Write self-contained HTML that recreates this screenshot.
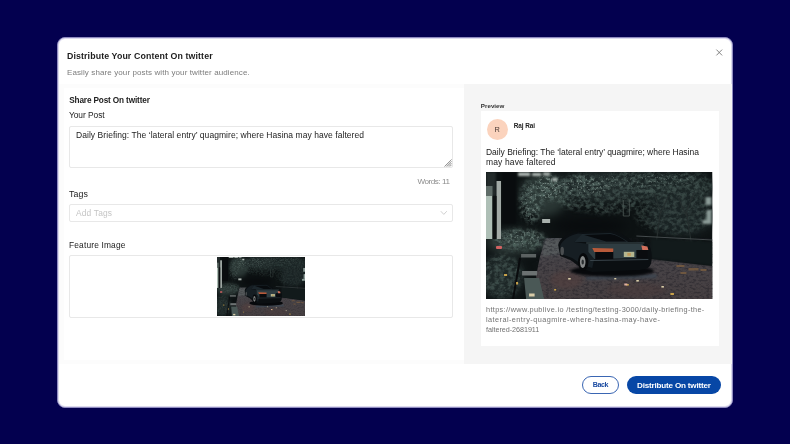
<!DOCTYPE html>
<html><head><meta charset="utf-8">
<style>
*{margin:0;padding:0;box-sizing:border-box}
html,body{width:790px;height:444px;overflow:hidden;background:#03004f;font-family:"Liberation Sans",sans-serif;color:#222}
.abs{position:absolute}
.t{position:absolute;white-space:nowrap;line-height:1;filter:blur(0.3px)}
#modal{position:absolute;left:57px;top:37px;width:676px;height:370.6px;background:#fff;border-radius:8px;border:1px solid #8f8bc0;box-shadow:inset 0 0 0 1px #dcdaee}
#bodybg{position:absolute;left:59px;top:84px;width:405px;height:279.5px;background:#fcfcfc}
#left{position:absolute;left:64px;top:88px;width:400px;height:272px;background:#fff}
#right{position:absolute;left:464px;top:84px;width:267.5px;height:279.5px;background:#f5f5f5}
#card{position:absolute;left:481px;top:111.4px;width:237.6px;height:234.4px;background:#fff}
.box{position:absolute;background:#fff;border:1px solid #e8e8e8;border-radius:2px}
</style></head><body>
<svg width="0" height="0" style="position:absolute">
<defs>
<filter id="fol" x="0" y="0" width="100%" height="100%" color-interpolation-filters="sRGB">
<feTurbulence type="fractalNoise" baseFrequency="0.22 0.28" numOctaves="3" seed="9" result="n"/>
<feColorMatrix in="n" type="matrix" values="0 0 0 0 0.33  0 0 0 0 0.41  0 0 0 0 0.39  3 0 0 0 -1.1"/>
</filter>
<filter id="fol2" x="0" y="0" width="100%" height="100%" color-interpolation-filters="sRGB">
<feTurbulence type="fractalNoise" baseFrequency="0.45" numOctaves="2" seed="23" result="n"/>
<feColorMatrix in="n" type="matrix" values="0 0 0 0 0.62  0 0 0 0 0.70  0 0 0 0 0.67  7 0 0 0 -4.0"/>
</filter>
<filter id="pav" x="0" y="0" width="100%" height="100%" color-interpolation-filters="sRGB">
<feTurbulence type="fractalNoise" baseFrequency="0.3 0.5" numOctaves="2" seed="11" result="n"/>
<feColorMatrix in="n" type="matrix" values="0 0 0 0 0.10  0 0 0 0 0.10  0 0 0 0 0.13  4 0 0 0 -1.8"/>
</filter>
<filter id="bl1" color-interpolation-filters="sRGB" x="-30%" y="-30%" width="160%" height="160%"><feGaussianBlur stdDeviation="0.8"/></filter>
<filter id="bl2" color-interpolation-filters="sRGB" x="-50%" y="-50%" width="200%" height="200%"><feGaussianBlur stdDeviation="2.2"/></filter>
<filter id="bl4" color-interpolation-filters="sRGB" x="-50%" y="-50%" width="200%" height="200%"><feGaussianBlur stdDeviation="4"/></filter>
<linearGradient id="pg" x1="0" y1="0" x2="0" y2="1"><stop offset="0" stop-color="#4c5054"/><stop offset="0.4" stop-color="#474347"/><stop offset="1" stop-color="#463f41"/></linearGradient>
<mask id="mk1" maskUnits="userSpaceOnUse" x="0" y="0" width="226" height="127"><g filter="url(#bl2)">
<ellipse cx="45" cy="30" rx="12" ry="22" fill="#bbb"/>
<ellipse cx="64" cy="16" rx="14" ry="13" fill="#d0d0d0"/>
<ellipse cx="95" cy="20" rx="28" ry="18" fill="#ccc"/>
<ellipse cx="150" cy="13" rx="40" ry="13" fill="#a0a0a0"/>
<ellipse cx="200" cy="14" rx="26" ry="14" fill="#909090"/>
<ellipse cx="188" cy="42" rx="40" ry="20" fill="#707070"/>
<ellipse cx="120" cy="30" rx="36" ry="12" fill="#8a8a8a"/>
<ellipse cx="34" cy="68" rx="26" ry="11" fill="#ccc"/>
<ellipse cx="16" cy="104" rx="20" ry="22" fill="#8a8a8a"/>
<ellipse cx="198" cy="78" rx="30" ry="10" fill="#505050"/>
</g></mask>
<mask id="mk2" maskUnits="userSpaceOnUse" x="0" y="0" width="226" height="127"><g filter="url(#bl2)">
<ellipse cx="62" cy="16" rx="14" ry="12" fill="#8a8a8a"/>
<ellipse cx="44" cy="30" rx="9" ry="18" fill="#666"/>
<ellipse cx="100" cy="14" rx="24" ry="10" fill="#777"/>
<ellipse cx="160" cy="8" rx="50" ry="7" fill="#555"/>
<ellipse cx="36" cy="66" rx="20" ry="8" fill="#666"/>
</g></mask>
<symbol id="photo" viewBox="0 0 226 127" preserveAspectRatio="none">
<rect width="226" height="127" fill="#0d1213"/>
<!-- mid-tone foliage masses -->
<g filter="url(#bl4)">
<ellipse cx="58" cy="22" rx="24" ry="22" fill="#2a3634"/>
<ellipse cx="120" cy="14" rx="50" ry="16" fill="#202a2a"/>
<ellipse cx="185" cy="16" rx="45" ry="16" fill="#1c2626"/>
<ellipse cx="195" cy="44" rx="34" ry="20" fill="#1a2324"/>
<ellipse cx="30" cy="70" rx="30" ry="12" fill="#2c3836"/>
<ellipse cx="16" cy="105" rx="22" ry="22" fill="#1e2828"/>
<ellipse cx="104" cy="54" rx="36" ry="8" fill="#090c0e"/>
</g>
<!-- foliage speckle -->
<g style="opacity:var(--spk,1)">
<rect x="0" y="0" width="226" height="127" filter="url(#fol)" mask="url(#mk1)"/>
<rect x="0" y="0" width="226" height="127" filter="url(#fol2)" mask="url(#mk2)"/>
</g>
<!-- dark trunk -->
<rect x="16" y="0" width="14" height="52" fill="#090c0e" filter="url(#bl1)"/>
<rect x="0" y="0" width="10" height="24" fill="#232b2b" filter="url(#bl1)"/>
<!-- pillar + post -->
<rect x="0" y="24" width="6.5" height="43" fill="#aebfb6"/>
<rect x="0" y="14" width="6.5" height="10" fill="#5f6c68"/>
<rect x="10.5" y="9" width="4.5" height="58" fill="#a2aaa6"/>
<rect x="6.5" y="24" width="4" height="43" fill="#0d1112"/>
<!-- sky bits -->
<g fill="#b4bcb8" filter="url(#bl1)"><rect x="32" y="0.5" width="12" height="3.5"/><rect x="46" y="1" width="9" height="3"/><rect x="57" y="0.5" width="7" height="3"/><rect x="66" y="6" width="5" height="3"/></g>
<rect x="56" y="47" width="8" height="4" fill="#a8b0ac"/>
<!-- right house bits -->
<g fill="#8c9c98" filter="url(#bl1)"><rect x="219" y="25" width="6" height="8"/><rect x="220" y="38" width="5" height="10"/><rect x="216" y="48" width="9" height="4"/></g>
<path d="M137 28 V44 M143 28 V44 M137 44 H143" stroke="#4c5654" stroke-width="0.8" fill="none"/>
<!-- tree trunks right -->
<path d="M170 70 L174 40 L168 22 M174 42 L182 24 M205 72 L200 40 L208 20 M200 44 L192 26" stroke="#262e2e" stroke-width="1.1" fill="none"/>
<!-- pavement -->
<path d="M60 66 L100 66 L100 90 L164 87 L226 94 L226 127 L52 127 L50 104 L54 84 Z" fill="url(#pg)"/>
<path d="M58 68 L74 68 L76 82 L56 84 Z" fill="#55595b" filter="url(#bl1)"/>
<rect x="50" y="66" width="176" height="61" filter="url(#pav)" opacity="0.7" style="opacity:var(--pv,0.38)"/>
<ellipse cx="80" cy="108" rx="16" ry="9" fill="#54403f" opacity="0.6" filter="url(#bl2)"/>
<ellipse cx="150" cy="118" rx="30" ry="7" fill="#4c3c3c" opacity="0.5" filter="url(#bl2)"/>
<path d="M100 104 L170 102 L170 106 L100 108 Z" fill="#3c4854" opacity="0.7" filter="url(#bl1)"/>
<!-- steps -->
<rect x="35" y="82" width="15" height="3.5" fill="#5c6262"/>
<rect x="36" y="99" width="15" height="4.5" fill="#6c7272"/>
<path d="M38 106 L53 106 L58 127 L40 127 Z" fill="#4a5856"/>
<path d="M34 86 L27 127" stroke="#0a0c0e" stroke-width="2"/>
<rect x="10" y="74" width="6" height="3" rx="1" fill="#d06262"/>
<!-- dark bush right -->
<path d="M164 66 L226 70 L226 93.5 L164 86.5 Z" fill="#121a1b" filter="url(#bl1)"/>
<path d="M150 64 L226 68" stroke="#444a4c" stroke-width="1.2"/>
<!-- car shadow -->
<ellipse cx="126" cy="99" rx="42" ry="5.5" fill="#07090c" filter="url(#bl1)"/>
<!-- car body -->
<path d="M72 73 C73 66 82 61 92 60 L126 59 C134 60 140 64 146 70 L160 72 C165 74 166 82 165 90 C164 96 160 98 150 98 L106 100 C96 98 90 92 84 88 L74 84 Z" fill="#0b0f12"/>
<path d="M74 74 C76 68 84 63 92 61.5 L98 62 L88 70 L102 72 L102 80 L108 87 L106 96 C98 94 92 90 86 86 L75 82 Z" fill="#161e23"/>
<path d="M88 70 L96 62 L124 61 C130 62 136 66 142 70 Z" fill="#1c262c"/>
<path d="M98 63 L124 62 C130 63 135 66 140 69.5 L120 69.5 Z" fill="#080b0e"/>
<path d="M102 72 L156 72 L160 76 L158 86 L108 87 L102 80 Z" fill="#2f3d42"/>
<path d="M100 71 L158 71" stroke="#4c5c62" stroke-width="0.8"/>
<rect x="109" y="79" width="18" height="8.5" fill="#080a0d"/>
<rect x="150" y="78" width="11" height="8" fill="#0a0c0f"/>
<path d="M106 76 L127 76.5 L127 80 L108 80 Z" fill="#b85a3a"/>
<path d="M155 73.5 L161 74.5 L162 78 L156 78 Z" fill="#d2705c"/>
<rect x="137.5" y="79.8" width="10.5" height="5.2" fill="#b4b690"/>
<rect x="141" y="81" width="3.5" height="2.8" fill="#c09a5a"/>
<path d="M104 88.5 L162 87.5" stroke="#3e4a50" stroke-width="0.9"/>
<!-- wheel -->
<ellipse cx="97" cy="90" rx="5.2" ry="9" fill="#07090b"/>
<ellipse cx="96.5" cy="90" rx="2.8" ry="6" fill="#858888"/>
<ellipse cx="96.5" cy="90" rx="1.2" ry="2.6" fill="#2a2e30"/>
<ellipse cx="76" cy="79" rx="1.8" ry="4.2" fill="#4a4e50"/>
<!-- leaves -->
<g fill="#c8a24a"><rect x="18" y="102" width="3" height="2"/><rect x="30" y="110" width="2" height="2.5"/><rect x="140" y="112" width="2.5" height="1.6"/><rect x="184" y="121" width="3.5" height="2"/><rect x="68" y="117" width="2" height="1.6"/></g>
<g fill="#d8cca8"><rect x="43" y="121.5" width="5.5" height="3"/><rect x="82" y="106" width="2.5" height="1.6"/><rect x="150" y="108" width="2.5" height="1.6"/><rect x="175" y="114" width="2.5" height="1.6"/><rect x="128" y="106" width="2" height="1.4"/></g>
<rect x="138" y="111.5" width="3" height="2" fill="#e0b0a0"/>
<g fill="#7a5e40" opacity="0.8"><rect x="190" y="93" width="8" height="2"/><rect x="202" y="96" width="10" height="2.5"/><rect x="194" y="100" width="6" height="2"/><rect x="214" y="97" width="6" height="2"/></g>
</symbol>
</defs></svg>

<div id="modal"></div>
<div id="bodybg"></div>
<div id="left"></div>
<div id="right"></div>
<div id="card"></div>
<svg class="abs" style="left:715px;top:48px" width="9" height="9" viewBox="0 0 9 9"><path d="M1.4 1.6 L7.1 7.4 M7.1 1.6 L1.4 7.4" stroke="#6e6e6e" stroke-width="0.85" fill="none"/></svg>
<div class="box" style="left:69px;top:126px;width:383.5px;height:42px"></div>
<svg class="abs" style="left:443.5px;top:158.5px" width="8" height="8" viewBox="0 0 9 9"><path d="M0.5 8.5 L8.5 0.5 M2.5 8.5 L8.5 2.5 M4.5 8.5 L8.5 4.5 M6.5 8.5 L8.5 6.5" stroke="#6a6a6a" stroke-width="0.8" fill="none"/></svg>
<div class="box" style="left:69px;top:204px;width:383.5px;height:18px"></div>
<svg class="abs" style="left:439px;top:209px" width="10" height="8" viewBox="0 0 10 8"><path d="M1.8 2.2 L4.8 5.4 L7.8 2.2" stroke="#c4c4c4" stroke-width="0.8" fill="none"/></svg>
<div class="box" style="left:69px;top:255px;width:383.5px;height:63px"></div>
<div class="abs" style="left:217px;top:257px;width:88px;height:58.5px;overflow:hidden;background:#141a1b"><svg style="position:absolute;left:-1px;top:-1px;filter:blur(0.7px);--spk:0.42;--pv:0.2" width="90" height="60.5"><use href="#photo" width="90" height="60.5"/></svg></div>
<div class="abs" style="left:486.5px;top:119px;width:21.4px;height:21.4px;border-radius:50%;background:#fbd3bd"></div>
<svg class="abs" style="left:486px;top:172px" width="226.5" height="127"><use href="#photo" width="226.5" height="127"/></svg>
<div class="abs" style="left:582px;top:376.4px;width:37px;height:17.6px;border:1px solid #3a66b3;border-radius:9px;background:#fff"></div>
<div class="abs" style="left:626.6px;top:376.4px;width:94.8px;height:17.6px;border-radius:9px;background:#0747a6"></div>
<span class="t" id="title" style="left:67px;top:51.80px;font-size:8.8px;font-weight:bold;letter-spacing:0.112px;color:#1d1d1d">Distribute Your Content On twitter</span>
<span class="t" id="sub" style="left:67px;top:68.50px;font-size:8.0px;letter-spacing:0.106px;color:#7c7c7c">Easily share your posts with your twitter audience.</span>
<span class="t" id="share" style="left:69.2px;top:97.00px;font-size:8.2px;font-weight:bold;letter-spacing:-0.128px;color:#222">Share Post On twitter</span>
<span class="t" id="yourpost" style="left:69px;top:110.80px;font-size:8.4px;letter-spacing:-0.052px;color:#222">Your Post</span>
<span class="t" id="post" style="left:76px;top:130.95px;font-size:8.5px;letter-spacing:0.054px;color:#222">Daily Briefing: The ‘lateral entry’ quagmire; where Hasina may have faltered</span>
<span class="t" id="words" style="left:417.5px;top:178.25px;font-size:8.1px;letter-spacing:-0.455px;color:#8c8c8c">Words: 11</span>
<span class="t" id="tags" style="left:69px;top:189.50px;font-size:8.8px;letter-spacing:0.102px;color:#222">Tags</span>
<span class="t" id="addtags" style="left:76px;top:208.70px;font-size:8.4px;letter-spacing:0.174px;color:#c4c4c4">Add Tags</span>
<span class="t" id="feat" style="left:69px;top:240.80px;font-size:8.4px;letter-spacing:0.161px;color:#222">Feature Image</span>
<span class="t" id="preview" style="left:480.8px;top:102.80px;font-size:6.2px;font-weight:bold;letter-spacing:0.035px;color:#333">Preview</span>
<span class="t" id="R" style="left:494.6px;top:126.30px;font-size:7.4px;letter-spacing:0.000px;color:#4a3a34">R</span>
<span class="t" id="raj" style="left:513.8px;top:123.10px;font-size:6.4px;font-weight:bold;letter-spacing:-0.062px;color:#222">Raj Rai</span>
<span class="t" id="p1" style="left:486px;top:148.15px;font-size:8.5px;letter-spacing:-0.020px;color:#222">Daily Briefing: The ‘lateral entry’ quagmire; where Hasina</span>
<span class="t" id="p2" style="left:486px;top:158.05px;font-size:8.5px;letter-spacing:0.126px;color:#222">may have faltered</span>
<span class="t" id="u1" style="left:486px;top:306.15px;font-size:7.3px;letter-spacing:0.349px;color:#727272">https://www.publive.io /testing/testing-3000/daily-briefing-the-</span>
<span class="t" id="u2" style="left:486px;top:316.15px;font-size:7.3px;letter-spacing:0.443px;color:#727272">lateral-entry-quagmire-where-hasina-may-have-</span>
<span class="t" id="u3" style="left:486px;top:326.00px;font-size:7.2px;letter-spacing:-0.035px;color:#727272">faltered-2681911</span>
<span class="t" id="back" style="left:592.8px;top:382.15px;font-size:7.1px;font-weight:bold;letter-spacing:-0.423px;color:#1c4ca2">Back</span>
<span class="t" id="dist" style="left:637px;top:381.65px;font-size:8.1px;font-weight:bold;letter-spacing:-0.190px;color:#fff">Distribute On twitter</span>
</body></html>
